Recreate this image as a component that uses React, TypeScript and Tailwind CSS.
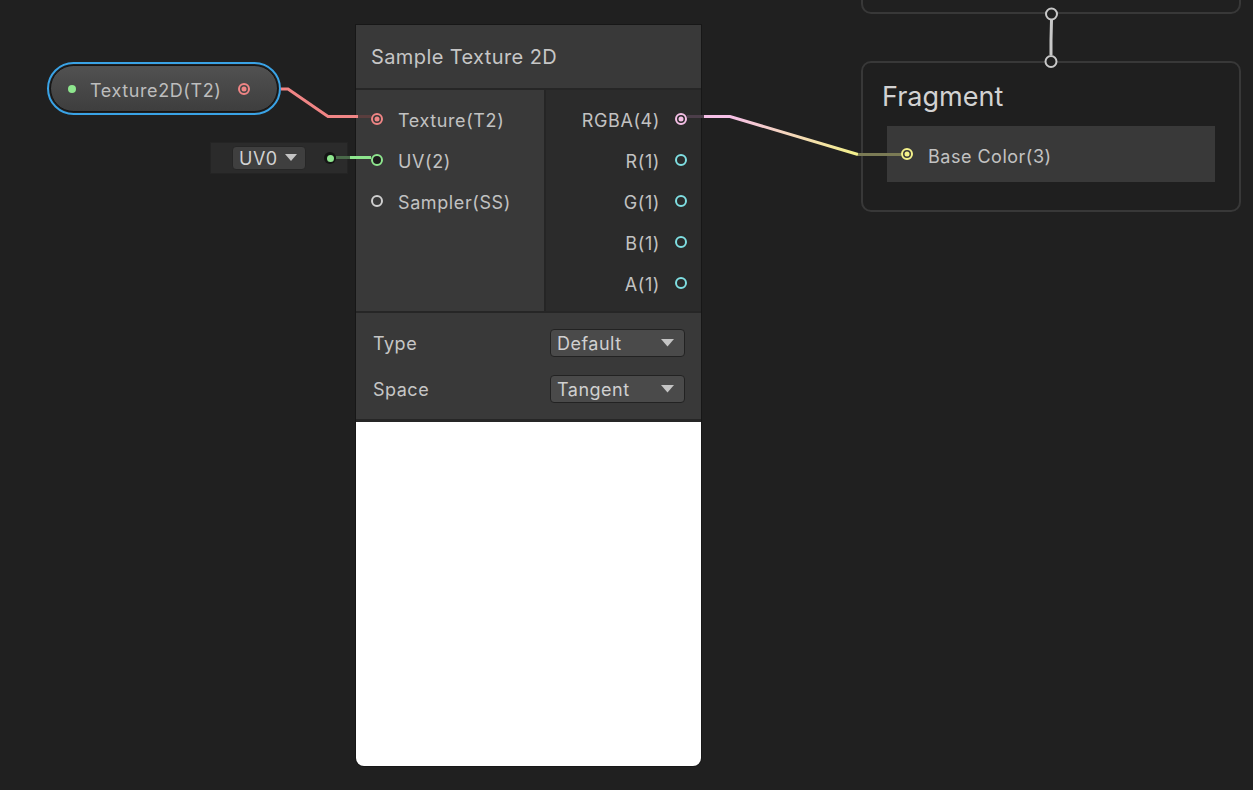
import React from 'react';

const font = { fontFamily: 'Inter, "Noto Sans", sans-serif' };

function Port({ color, filled, dark }: { color: string; filled?: boolean; dark?: boolean }) {
  return (
    <svg width="14" height="14" viewBox="0 0 14 14" className="shrink-0">
      <circle cx="7" cy="7" r="5" fill={dark ? '#1c1c1c' : 'none'} stroke={color} strokeWidth="2" />
      {filled && <circle cx="7" cy="7" r="2.5" fill={color} />}
    </svg>
  );
}

function Dropdown({ label }: { label: string }) {
  return (
    <div className="w-[135px] h-[28px] rounded-[4px] bg-[#4a4a4a] border border-[#222222] flex items-center justify-between pl-[6px] pr-[10px] text-[18px] tracking-[0.5px] text-[#d0d0d0]">
      <span>{label}</span>
      <svg width="13" height="8" viewBox="0 0 13 8">
        <path d="M0 0 L13 0 L6.5 7.5 Z" fill="#c4c4c4" />
      </svg>
    </div>
  );
}

export default function App() {
  const inputs = [
    { label: 'Texture(T2)', color: '#f08585', filled: true },
    { label: 'UV(2)', color: '#8ee68e', dark: true },
    { label: 'Sampler(SS)', color: '#d0d0d0' },
  ];
  const outputs = [
    { label: 'RGBA(4)', color: '#f5bfe6', filled: true },
    { label: 'R(1)', color: '#7fdfe2' },
    { label: 'G(1)', color: '#7fdfe2' },
    { label: 'B(1)', color: '#7fdfe2' },
    { label: 'A(1)', color: '#7fdfe2' },
  ];

  return (
    <div className="relative w-[1253px] h-[790px] overflow-hidden bg-[#202020]" style={font}>
      {/* Top (vertex) node, mostly off screen */}
      <div className="absolute left-[861px] top-[-40px] w-[380px] h-[54px] rounded-[10px] border-2 border-[#383838]" />

      {/* Fragment node */}
      <div className="absolute left-[861px] top-[61px] w-[380px] h-[151px] rounded-[10px] border-2 border-[#383838] bg-[#1f1f1f] flex flex-col">
        <div className="h-[63px] pl-[19px] pt-[20px] text-[27px] text-[#d2d2d2] leading-none">Fragment</div>
        <div className="mx-[24px] h-[56px] bg-[#393939] flex items-center pl-[13px] gap-[14px] text-[18px] tracking-[0.5px] text-[#c2c2c2]">
          <Port color="#f3f18a" filled />
          <span className="mt-[5px]">Base Color(3)</span>
        </div>
      </div>

      {/* Texture2D property node */}
      <div className="absolute left-[47px] top-[62px] w-[234px] h-[53px] rounded-full border-2 border-[#3aa3e6] p-px">
        <div className="w-full h-full rounded-full border border-[#141414] bg-gradient-to-b from-[#515151] to-[#3e3e3e] flex items-center pl-[17px] pr-[26px] text-[18px] tracking-[0.6px] text-[#bdbdbd]">
          <span className="w-[8px] h-[8px] rounded-full bg-[#8ee68e]" />
          <span className="ml-[14px] flex-1 mt-[3px]">Texture2D(T2)</span>
          <Port color="#f08585" filled />
        </div>
      </div>

      {/* UV0 inline input */}
      <div className="absolute left-[210px] top-[142px] w-[138px] h-[32px] bg-[#2b2b2b] border border-[#242424] flex items-center pl-[21px]">
        <div className="h-[24px] w-[74px] rounded-[4px] bg-[#3f3f3f] border border-[#262626] flex items-center justify-between pl-[6px] pr-[8px] text-[18px] tracking-[0.5px] text-[#d2d2d2]">
          <span>UV0</span>
          <svg width="12" height="8" viewBox="0 0 12 8">
            <path d="M0 0 L12 0 L6 7 Z" fill="#c4c4c4" />
          </svg>
        </div>
        <span className="ml-[18px] w-[12px] h-[12px] rounded-full bg-[#141414] flex items-center justify-center">
          <span className="w-[7px] h-[7px] rounded-full bg-[#8ee68e]" />
        </span>
      </div>

      {/* Sample Texture 2D node */}
      <div className="absolute left-[355px] top-[24px] w-[347px] h-[743px] border border-[#171717] rounded-b-[9px] flex flex-col bg-[#232323]">
        <div className="h-[63px] bg-[#393939] flex items-center pl-[15px] text-[20px] tracking-[0.4px] text-[#c6c6c6]">Sample Texture 2D</div>
        <div className="h-[2px] bg-[#262626]" />
        <div className="h-[221px] flex">
          <div className="w-[188px] bg-[#393939] pt-[8px]">
            {inputs.map((p) => (
              <div key={p.label} className="h-[41px] flex items-center pl-[14px] gap-[14px] text-[18px] tracking-[0.6px] text-[#c2c2c2]">
                <Port color={p.color} filled={p.filled} dark={p.dark} />
                <span className="mt-[3px]">{p.label}</span>
              </div>
            ))}
          </div>
          <div className="w-[2px] bg-[#252525]" />
          <div className="flex-1 bg-[#2b2b2b] pt-[8px]">
            {outputs.map((p) => (
              <div key={p.label} className="h-[41px] flex items-center justify-end pr-[13px] gap-[14px] text-[18px] tracking-[0.6px] text-[#c2c2c2]">
                <span className="mt-[3px]">{p.label}</span>
                <Port color={p.color} filled={p.filled} />
              </div>
            ))}
          </div>
        </div>
        <div className="h-[2px] bg-[#262626]" />
        <div className="h-[106px] bg-[#393939] flex flex-col gap-[18px] pt-[16px] pl-[17px] pr-[16px] text-[18px] tracking-[0.5px] text-[#c6c6c6]">
          <div className="flex items-center justify-between">
            <span>Type</span>
            <Dropdown label="Default" />
          </div>
          <div className="flex items-center justify-between">
            <span>Space</span>
            <Dropdown label="Tangent" />
          </div>
        </div>
        <div className="h-[3px] bg-[#262626]" />
        <div className="flex-1 bg-white rounded-b-[8px]" />
      </div>

      {/* Wires */}
      <svg className="absolute inset-0 pointer-events-none" width="1253" height="790">
        <defs>
          <linearGradient id="pk" x1="730" y1="0" x2="858" y2="0" gradientUnits="userSpaceOnUse">
            <stop offset="0" stopColor="#f5bfe6" />
            <stop offset="1" stopColor="#f3f18a" />
          </linearGradient>
        </defs>
        <path d="M281 89 L288 89 L328 116.5 L358 116.5" fill="none" stroke="#f08585" strokeWidth="3" />
        <path d="M358 116.5 L371 116.5" stroke="#5a3e3e" strokeWidth="3" />
        <path d="M336 157.5 L350 157.5" stroke="#4a6a4a" strokeWidth="3" />
        <path d="M350 157.5 L371 157.5" stroke="#8ee68e" strokeWidth="3" />
        <path d="M687 116.5 L704 116.5" stroke="#4c3e4a" strokeWidth="3" />
        <path d="M704 116.5 L730 116.5 L858 154.5" fill="none" stroke="url(#pk)" strokeWidth="3" />
        <path d="M858 154.5 L901 154.5" stroke="#7b7b55" strokeWidth="3" />
        <path d="M1051.5 20 L1051 40 L1051 55" stroke="#c8c8c8" strokeWidth="3" />
        <circle cx="1051.5" cy="14" r="5.5" fill="#202020" stroke="#c8c8c8" strokeWidth="2" />
        <circle cx="1051" cy="61.5" r="5.5" fill="#202020" stroke="#c8c8c8" strokeWidth="2" />
      </svg>
    </div>
  );
}
